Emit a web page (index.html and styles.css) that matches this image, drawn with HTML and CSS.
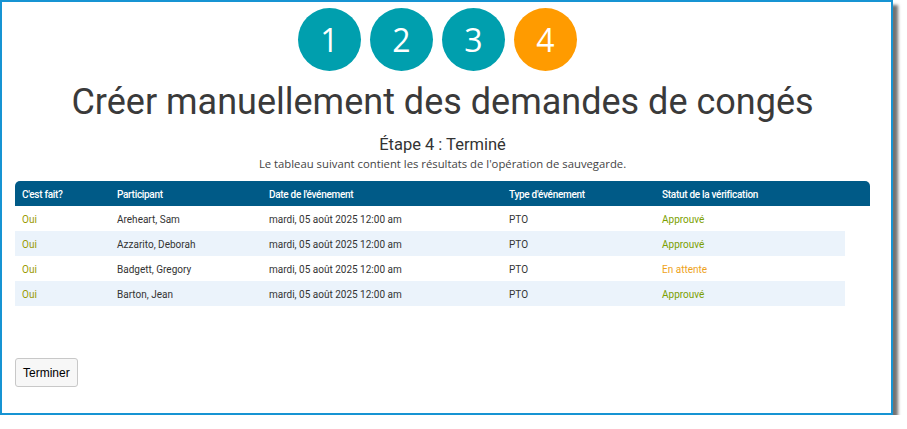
FILE: index.html
```html
<!DOCTYPE html>
<html lang="fr">
  <head>
    <meta charset="UTF-8" />
    <meta name="viewport" content="width=device-width, initial-scale=1.0" />
    <title>Créer manuellement des demandes de congés</title>
    <link rel="stylesheet" href="styles.css">
  </head>
  <body>
    <div class="frame">
      <div class="steps">
        <span class="step">1</span>
        <span class="step">2</span>
        <span class="step">3</span>
        <span class="step current">4</span>
      </div>

      <h1>Créer manuellement des demandes de congés</h1>
      <h2>Étape 4 : Terminé</h2>
      <p class="intro">Le tableau suivant contient les résultats de l'opération de sauvegarde.</p>

      <div class="results">
        <div class="row head">
          <span>C'est fait?</span>
          <span>Participant</span>
          <span>Date de l'événement</span>
          <span>Type d'événement</span>
          <span>Statut de la vérification</span>
        </div>
        <div class="row">
          <span class="done">Oui</span>
          <span>Areheart, Sam</span>
          <span>mardi, 05 août 2025 12:00 am</span>
          <span>PTO</span>
          <span class="ok">Approuvé</span>
        </div>
        <div class="row alt">
          <span class="done">Oui</span>
          <span>Azzarito, Deborah</span>
          <span>mardi, 05 août 2025 12:00 am</span>
          <span>PTO</span>
          <span class="ok">Approuvé</span>
        </div>
        <div class="row">
          <span class="done">Oui</span>
          <span>Badgett, Gregory</span>
          <span>mardi, 05 août 2025 12:00 am</span>
          <span>PTO</span>
          <span class="wait">En attente</span>
        </div>
        <div class="row alt">
          <span class="done">Oui</span>
          <span>Barton, Jean</span>
          <span>mardi, 05 août 2025 12:00 am</span>
          <span>PTO</span>
          <span class="ok">Approuvé</span>
        </div>
      </div>

      <button class="finish" type="button">Terminer</button>
    </div>
  </body>
</html>
```

FILE: styles.css
```css
body {
  margin: 0;
  background-color: #fff;
  font-family: Roboto, "Liberation Sans", sans-serif;
  color: #333;
}

.frame {
  box-sizing: border-box;
  width: 893px;
  height: 415px;
  border: 2px solid #1794d3;
  box-shadow: 5px 5px 3px rgba(0, 0, 0, 0.55);
  padding: 6px 21px 0 13px;
  display: flex;
  flex-direction: column;
}

.steps {
  display: flex;
  justify-content: center;
  gap: 9px;
  padding-right: 10px;
}

.step {
  width: 63px;
  height: 63px;
  border-radius: 50%;
  background-color: #009fae;
  color: #fff;
  font-family: "Open Sans", sans-serif;
  font-size: 32px;
  line-height: 63px;
  text-align: center;
}

.step.current {
  background-color: #ff9b00;
}

h1 {
  margin: 9px 0 0;
  font-size: 36px;
  font-weight: 400;
  line-height: 44px;
  text-align: center;
  color: #3a3a3a;
}

h2 {
  margin: 10px 0 0;
  font-size: 16.5px;
  font-weight: 400;
  line-height: 21px;
  text-align: center;
}

.intro {
  margin: 1px 0 0;
  font-family: "Open Sans", sans-serif;
  font-size: 11.3px;
  line-height: 15px;
  text-align: center;
  color: #444;
}

.results {
  margin-top: 10px;
  font-size: 10px;
}

.row {
  display: grid;
  grid-template-columns: 95px 152px 240px 153px 1fr;
  width: 830px;
  height: 25px;
  align-items: center;
}

.row span {
  padding-left: 7px;
  padding-top: 1px;
}

.row.head {
  width: 855px;
  background-color: #005a87;
  color: #fff;
  font-weight: 500;
  letter-spacing: -0.3px;
  border-radius: 5px 5px 0 0;
}

.row.alt {
  background-color: #ebf3fb;
}

.done {
  color: #9a9a00;
}

.ok {
  color: #7c9f00;
}

.wait {
  color: #eea21b;
}

.finish {
  align-self: flex-start;
  margin-top: 52px;
  height: 29px;
  padding: 0 7px;
  font-family: "Liberation Sans", Arial, sans-serif;
  font-size: 12px;
  color: #000;
  background-color: #f7f7f7;
  border: 1px solid #c8c8c8;
  border-radius: 3px;
}
```
